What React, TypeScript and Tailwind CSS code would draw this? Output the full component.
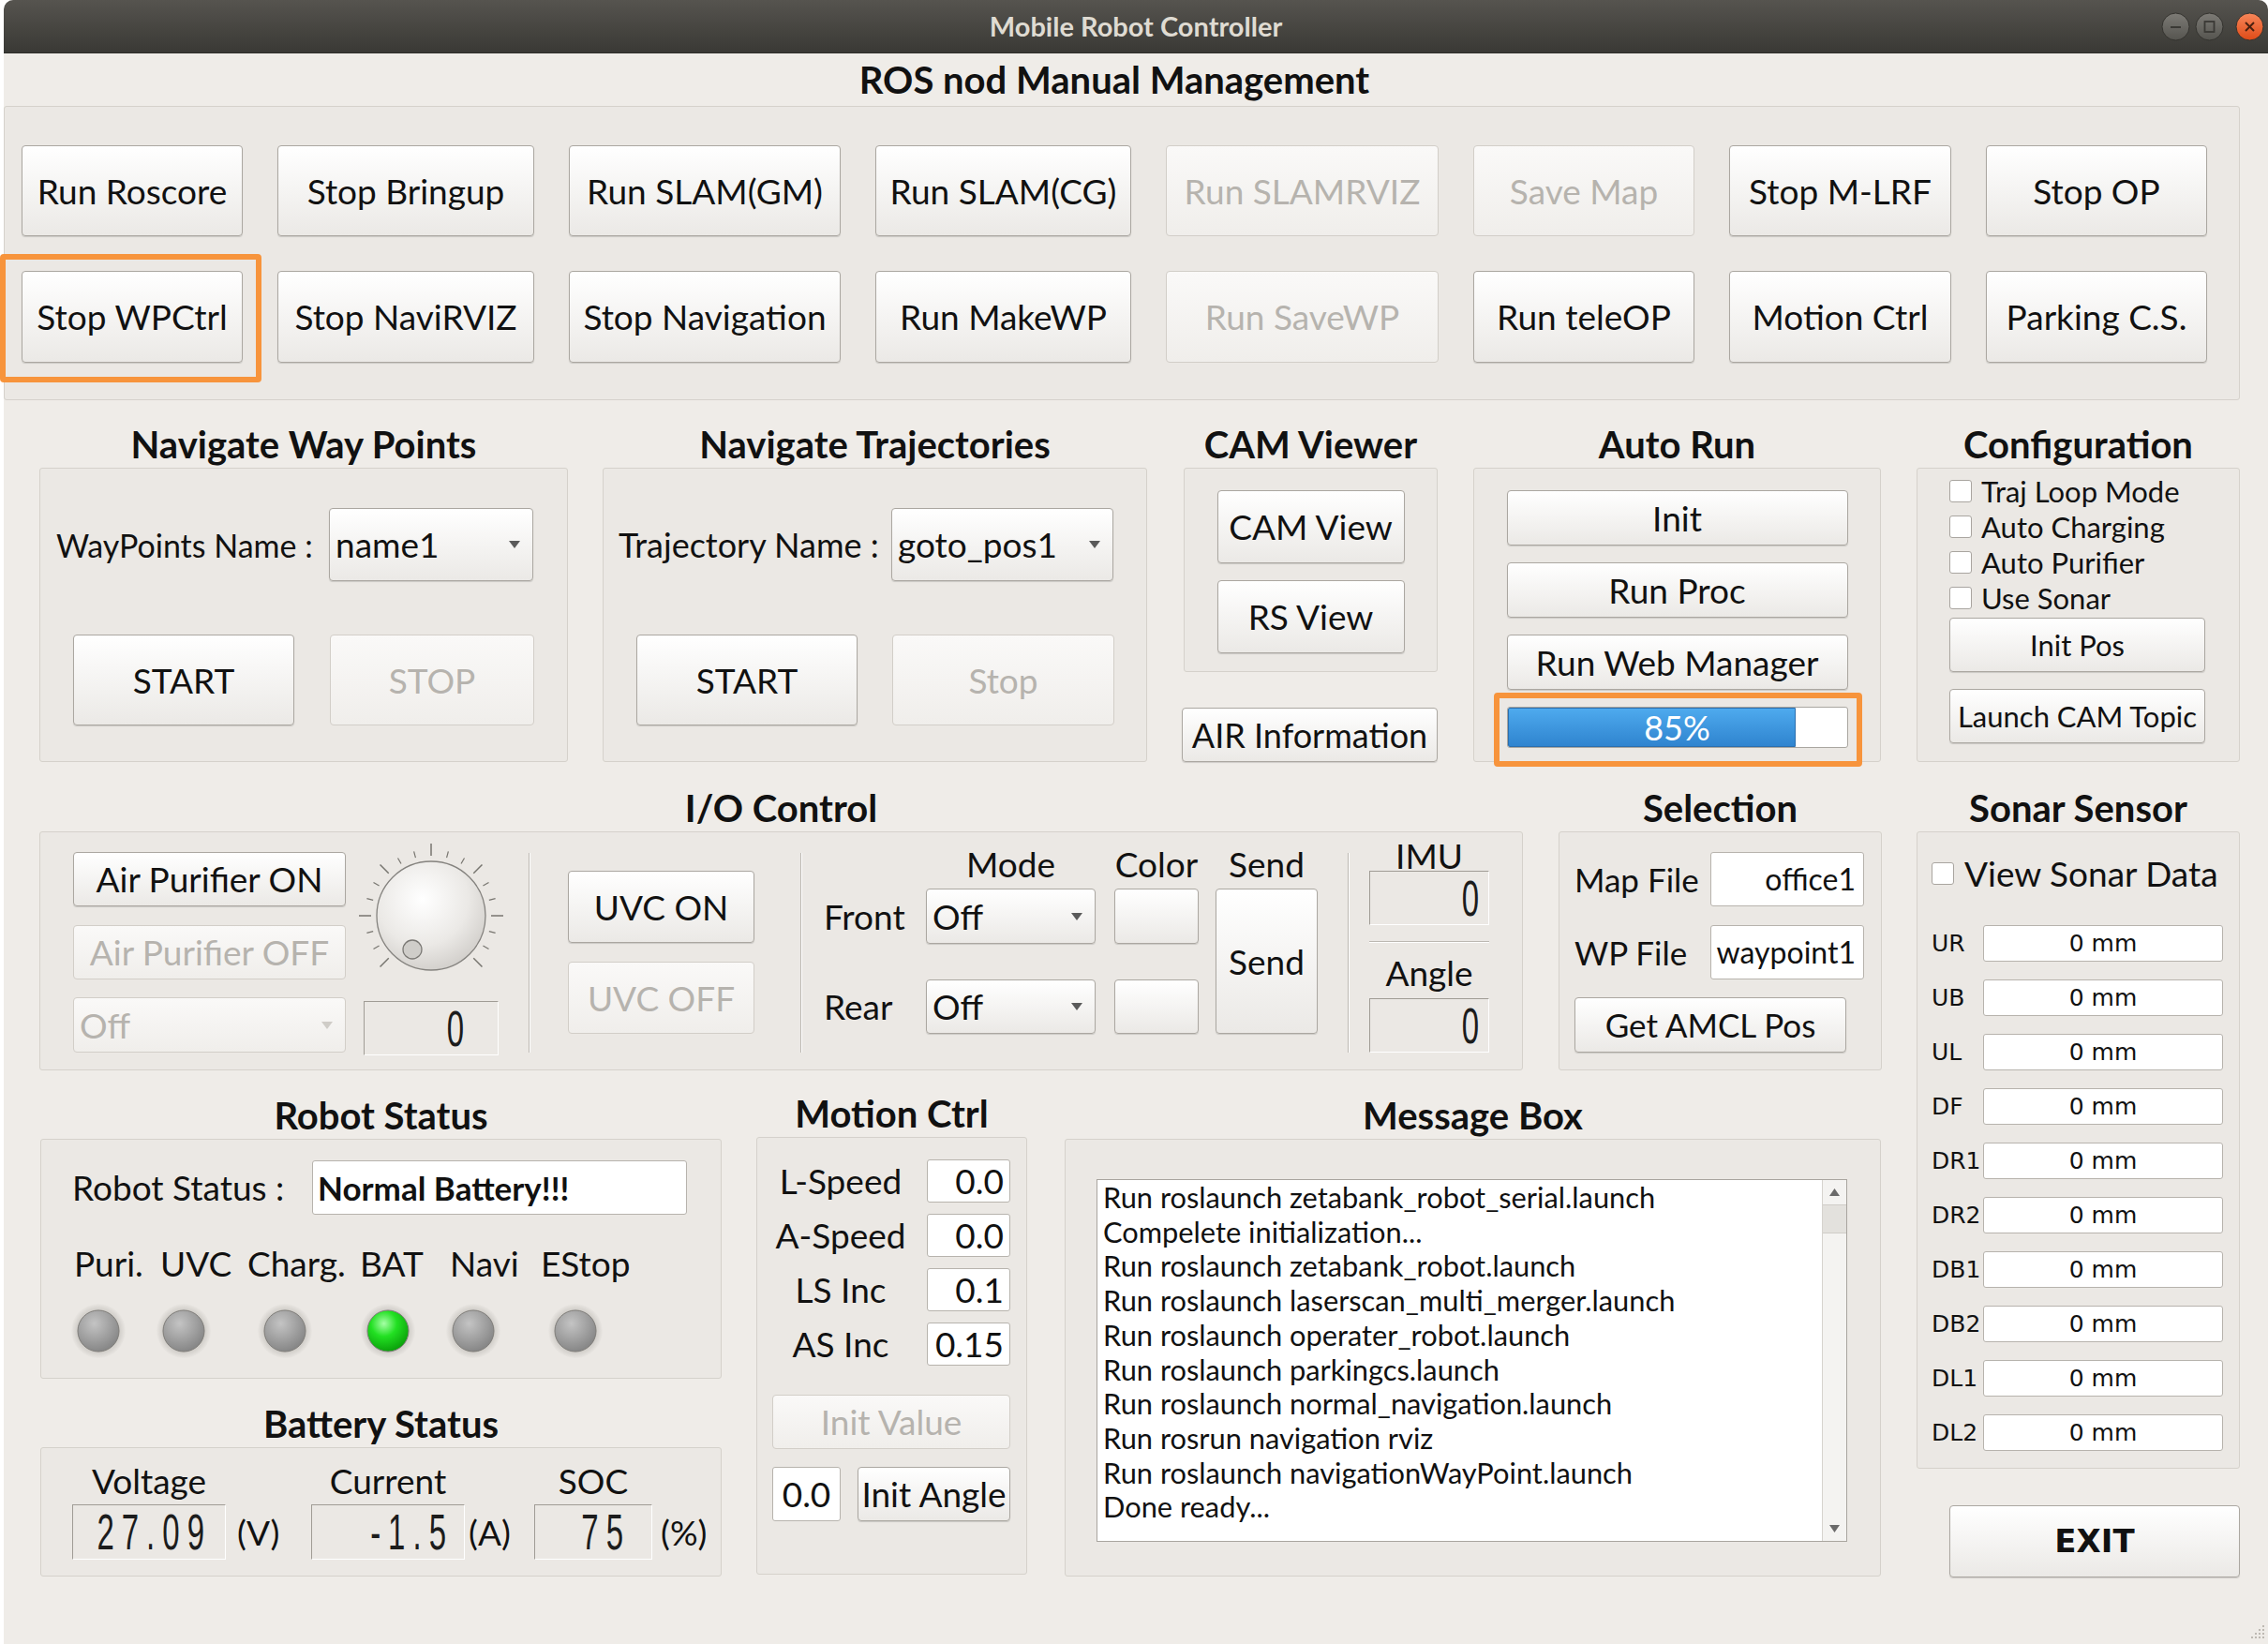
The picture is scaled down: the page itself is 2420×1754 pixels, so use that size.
import React from 'react';

const base = 'relative flex items-center whitespace-nowrap rounded-[4px] border bg-linear-to-b';
const onCls = 'border-[#aba7a1] from-[#ffffff] to-[#ebe9e6] text-[#111] shadow-[0_1px_1px_rgba(0,0,0,0.14)]';
const offCls = 'border-[#d2cec8] from-[#faf9f8] to-[#f0eeeb] text-[#b6b3ae]';
const fieldCls = 'flex items-center whitespace-nowrap rounded-[3px] border border-[#b7b3ad] bg-white';
const boxCls = 'rounded-[3px] border border-[#d5d1cb] bg-[#ebe8e4]';
const titleCls = 'flex items-end justify-center pb-[2px] text-[40px] font-bold leading-[46px] whitespace-nowrap';
const lcdCls = 'flex items-center justify-end border border-t-[#a09c95] border-l-[#a09c95] border-b-white border-r-white bg-[#ebe8e4]';
const sepCls = 'w-[2px] shrink-0 border-l border-l-[#bcb8b2] border-r border-r-white';

type BtnProps = { label: string; cls: string; off?: boolean; children?: React.ReactNode };

function Btn({ label, cls, off, children }: BtnProps) {
  return (
    <div className={`${base} justify-center ${off ? offCls : onCls} ${cls}`}>
      {label}
      {children}
    </div>
  );
}

function Combo({ value, cls, off }: { value: string; cls: string; off?: boolean }) {
  return (
    <div className={`${base} justify-between pl-[6px] pr-[13px] ${off ? offCls : onCls} ${cls}`}>
      <span>{value}</span>
      <svg width="12" height="8" viewBox="0 0 12 8">
        <polygon points="0,0 12,0 6,8" fill={off ? '#cfccc7' : '#5a5a5a'} />
      </svg>
    </div>
  );
}

function Lcd({ value, cls }: { value: string; cls: string }) {
  return (
    <div className={`${lcdCls} ${cls}`}>
      <span className="block font-['Liberation_Sans',sans-serif] text-[33px] leading-[33px] tracking-[8px] scale-y-[1.6] text-[#1c1c1c]">
        {value}
      </span>
    </div>
  );
}

function Check() {
  return <div className="w-[24px] h-[24px] shrink-0 rounded-[3px] border border-[#a9a5a0] bg-white" />;
}

function Dial() {
  const ticks = [];
  for (let i = 0; i <= 18; i++) {
    const a = ((-135 + i * 15) * Math.PI) / 180;
    const long = i % 3 === 0;
    const r1 = 64;
    const r2 = long ? 77 : 71;
    ticks.push(
      <line
        key={i}
        x1={72 + r1 * Math.sin(a)}
        y1={76 - r1 * Math.cos(a)}
        x2={72 + r2 * Math.sin(a)}
        y2={76 - r2 * Math.cos(a)}
        stroke="#77756f"
        strokeWidth={long ? 1.5 : 1.2}
      />
    );
  }
  return (
    <svg width="144" height="152" viewBox="0 0 144 152" className="overflow-visible">
      <defs>
        <radialGradient id="knobG" cx="42%" cy="35%" r="70%">
          <stop offset="0%" stopColor="#ffffff" />
          <stop offset="60%" stopColor="#ebe9e6" />
          <stop offset="100%" stopColor="#cfccc8" />
        </radialGradient>
      </defs>
      {ticks}
      <circle cx="72" cy="76" r="58" fill="url(#knobG)" stroke="#85837f" strokeWidth="1.3" />
      <circle cx="52" cy="112" r="10" fill="#cfcdc9" stroke="#7b7975" strokeWidth="1.3" />
    </svg>
  );
}

function Led({ on }: { on?: boolean }) {
  return (
    <svg width="60" height="60" viewBox="0 0 60 60" className="shrink-0">
      <defs>
        <radialGradient id="ledOffG" cx="40%" cy="32%" r="70%">
          <stop offset="0%" stopColor="#c4c4c4" />
          <stop offset="100%" stopColor="#858585" />
        </radialGradient>
        <radialGradient id="ledOnG" cx="40%" cy="32%" r="70%">
          <stop offset="0%" stopColor="#a6ffa6" />
          <stop offset="45%" stopColor="#22e022" />
          <stop offset="100%" stopColor="#0a9f0a" />
        </radialGradient>
        <radialGradient id="haloG" cx="50%" cy="50%" r="50%">
          <stop offset="70%" stopColor="#c9c6c1" />
          <stop offset="100%" stopColor="#e9e6e2" />
        </radialGradient>
      </defs>
      <circle cx="30" cy="30" r="29" fill="url(#haloG)" />
      <circle cx="30" cy="30" r="22" fill={on ? 'url(#ledOnG)' : 'url(#ledOffG)'} stroke="#7f7d79" strokeWidth="1" />
    </svg>
  );
}

function WinBtn({ kind }: { kind: 'min' | 'max' | 'close' }) {
  const close = kind === 'close';
  return (
    <svg width="31" height="31" viewBox="0 0 31 31">
      <defs>
        <linearGradient id="wbGray" x1="0" y1="0" x2="0" y2="1">
          <stop offset="0%" stopColor="#7d7b76" />
          <stop offset="100%" stopColor="#55544f" />
        </linearGradient>
        <linearGradient id="wbClose" x1="0" y1="0" x2="0" y2="1">
          <stop offset="0%" stopColor="#f7875a" />
          <stop offset="100%" stopColor="#df4a17" />
        </linearGradient>
      </defs>
      <circle cx="15.5" cy="15.5" r="14.5" fill={close ? 'url(#wbClose)' : 'url(#wbGray)'} stroke="#33322e" strokeWidth="1" />
      {kind === 'min' && <line x1="10" y1="16" x2="21" y2="16" stroke="#3a3935" strokeWidth="2" />}
      {kind === 'max' && <rect x="10.5" y="10" width="10" height="11" fill="none" stroke="#3a3935" strokeWidth="1.8" />}
      {close && (
        <g stroke="#4a2010" strokeWidth="2">
          <line x1="11" y1="11" x2="20" y2="20" />
          <line x1="20" y1="11" x2="11" y2="20" />
        </g>
      )}
    </svg>
  );
}

export default function App() {
  const row1: [string, string, boolean][] = [
    ['Run Roscore', 'w-[236px]', false],
    ['Stop Bringup', 'w-[274px]', false],
    ['Run SLAM(GM)', 'w-[290px]', false],
    ['Run SLAM(CG)', 'w-[273px]', false],
    ['Run SLAMRVIZ', 'w-[291px]', true],
    ['Save Map', 'w-[236px]', true],
    ['Stop M-LRF', 'w-[237px]', false],
    ['Stop OP', 'w-[236px]', false],
  ];
  const row2: [string, string, boolean][] = [
    ['Stop WPCtrl', 'w-[236px]', false],
    ['Stop NaviRVIZ', 'w-[274px]', false],
    ['Stop Navigation', 'w-[290px]', false],
    ['Run MakeWP', 'w-[273px]', false],
    ['Run SaveWP', 'w-[291px]', true],
    ['Run teleOP', 'w-[236px]', false],
    ['Motion Ctrl', 'w-[237px]', false],
    ['Parking C.S.', 'w-[236px]', false],
  ];
  const sonar = ['UR', 'UB', 'UL', 'DF', 'DR1', 'DR2', 'DB1', 'DB2', 'DL1', 'DL2'];
  const messages = [
    'Run roslaunch zetabank_robot_serial.launch',
    'Compelete initialization...',
    'Run roslaunch zetabank_robot.launch',
    'Run roslaunch laserscan_multi_merger.launch',
    'Run roslaunch operater_robot.launch',
    'Run roslaunch parkingcs.launch',
    'Run roslaunch normal_navigation.launch',
    'Run rosrun navigation rviz',
    'Run roslaunch navigationWayPoint.launch',
    'Done ready...',
  ];
  const motion = [
    ['L-Speed', '0.0'],
    ['A-Speed', '0.0'],
    ['LS Inc', '0.1'],
    ['AS Inc', '0.15'],
  ];

  return (
    <div className="w-[2420px] h-[1754px] overflow-hidden bg-white font-['Lato','Noto_Sans',sans-serif] text-[37px] text-[#111]">
      <div className="relative ml-[4px] w-[2416px] h-[1754px] flex flex-col bg-[#efece8] rounded-t-[10px]">
        {/* title bar */}
        <div className="h-[57px] shrink-0 grid grid-cols-[1fr_auto_1fr] items-center rounded-t-[10px] bg-linear-to-b from-[#56544f] to-[#3a3935] border-b border-[#2e2d2a]">
          <div />
          <div className="text-[29px] font-bold text-[#dfdbd2]">Mobile Robot Controller</div>
          <div className="flex justify-end items-center pr-[4px]">
            <WinBtn kind="min" />
            <div className="w-[5px]" />
            <WinBtn kind="max" />
            <div className="w-[12px]" />
            <WinBtn kind="close" />
          </div>
        </div>

        {/* ROS node manual management */}
        <div className="h-[56px] w-[2370px] shrink-0 flex items-center justify-center text-[40px] font-bold">
          ROS nod Manual Management
        </div>
        <div className={`${boxCls} w-[2386px] h-[314px] shrink-0 flex flex-col gap-[37px] pt-[41px] pl-[18px]`}>
          <div className="flex gap-[37px] h-[97px]">
            {row1.map(([label, w, off]) => (
              <Btn key={label} label={label} off={off} cls={`${w} h-full`} />
            ))}
          </div>
          <div className="flex gap-[37px] h-[98px]">
            {row2.map(([label, w, off], i) => (
              <Btn key={label} label={label} off={off} cls={`${w} h-full`}>
                {i === 0 && (
                  <span className="pointer-events-none absolute left-[-24px] top-[-19px] w-[279px] h-[137px] rounded-[4px] border-[6px] border-[#f7943c]" />
                )}
              </Btn>
            ))}
          </div>
        </div>

        {/* middle row */}
        <div className="flex shrink-0 h-[386px]">
          <div className="ml-[38px] w-[564px] flex flex-col">
            <div className={`${titleCls} h-[72px]`}>Navigate Way Points</div>
            <div className={`${boxCls} h-[314px] pt-[42px] pl-[17px]`}>
              <div className="flex items-center">
                <div className="w-[291px] whitespace-nowrap text-[34px]">WayPoints Name :</div>
                <Combo value="name1" cls="w-[218px] h-[78px]" />
              </div>
              <div className="flex mt-[57px]">
                <Btn label="START" cls="ml-[18px] w-[236px] h-[97px]" />
                <Btn label="STOP" off cls="ml-[38px] w-[218px] h-[97px]" />
              </div>
            </div>
          </div>

          <div className="ml-[37px] w-[581px] flex flex-col">
            <div className={`${titleCls} h-[72px]`}>Navigate Trajectories</div>
            <div className={`${boxCls} h-[314px] pt-[42px] pl-[16px]`}>
              <div className="flex items-center">
                <div className="w-[291px] whitespace-nowrap text-[36px]">Trajectory Name :</div>
                <Combo value="goto_pos1" cls="w-[237px] h-[78px]" />
              </div>
              <div className="flex mt-[57px]">
                <Btn label="START" cls="ml-[19px] w-[236px] h-[97px]" />
                <Btn label="Stop" off cls="ml-[37px] w-[237px] h-[97px]" />
              </div>
            </div>
          </div>

          <div className="ml-[39px] w-[271px] flex flex-col">
            <div className={`${titleCls} h-[72px]`}>CAM Viewer</div>
            <div className={`${boxCls} h-[218px] flex flex-col items-center pt-[23px] gap-[18px]`}>
              <Btn label="CAM View" cls="w-[200px] h-[78px]" />
              <Btn label="RS View" cls="w-[200px] h-[78px]" />
            </div>
            <Btn label="AIR Information" cls="mt-[38px] -ml-[2px] w-[273px] h-[58px] text-[36px]" />
          </div>

          <div className="ml-[38px] w-[435px] flex flex-col">
            <div className={`${titleCls} h-[72px]`}>Auto Run</div>
            <div className={`${boxCls} h-[314px] flex flex-col items-center pt-[23px] gap-[18px]`}>
              <Btn label="Init" cls="w-[364px] h-[59px]" />
              <Btn label="Run Proc" cls="w-[364px] h-[59px]" />
              <Btn label="Run Web Manager" cls="w-[364px] h-[59px]" />
              <div className="relative w-[364px] h-[44px] rounded-[3px] border border-[#a9a6a0] bg-white">
                <div className="h-full w-[85%] rounded-l-[2px] border border-[#2c6fae] bg-linear-to-b from-[#4eaaee] to-[#2f84cf]" />
                <div className="absolute inset-0 flex items-center justify-center text-[36px] text-white">85%</div>
                <span className="pointer-events-none absolute left-[-15px] top-[-16px] w-[393px] h-[79px] rounded-[4px] border-[6px] border-[#f7943c]" />
              </div>
            </div>
          </div>

          <div className="ml-[38px] w-[345px] flex flex-col">
            <div className={`${titleCls} h-[72px]`}>Configuration</div>
            <div className={`${boxCls} h-[314px] flex flex-col pt-[5px] pl-[34px] text-[31px]`}>
              {['Traj Loop Mode', 'Auto Charging', 'Auto Purifier', 'Use Sonar'].map((t) => (
                <div key={t} className="h-[38px] flex items-center">
                  <Check />
                  <span className="ml-[10px] whitespace-nowrap">{t}</span>
                </div>
              ))}
              <Btn label="Init Pos" cls="mt-[2px] w-[273px] h-[58px]" />
              <Btn label="Launch CAM Topic" cls="mt-[18px] w-[273px] h-[58px]" />
            </div>
          </div>
        </div>

        {/* lower area */}
        <div className="flex">
          <div className="w-[2004px] flex flex-col">
            {/* row A */}
            <div className="flex">
              <div className="ml-[38px] w-[1583px] flex flex-col">
                <div className={`${titleCls} h-[74px]`}>I/O Control</div>
                <div className={`${boxCls} h-[255px] flex items-start`}>
                  <div className="ml-[35px] w-[291px] pt-[21px] flex flex-col">
                    <Btn label="Air Purifier ON" cls="w-full h-[58px]" />
                    <Btn label="Air Purifier OFF" off cls="mt-[20px] w-full h-[58px]" />
                    <Combo value="Off" off cls="mt-[19px] w-full h-[59px]" />
                  </div>
                  <div className="ml-[19px] w-[144px] pt-[13px] flex flex-col">
                    <Dial />
                    <Lcd value="0" cls="mt-[15px] w-[144px] h-[58px] pr-[28px]" />
                  </div>
                  <div className={`${sepCls} ml-[32px] mt-[22px] h-[213px]`} />
                  <div className="ml-[40px] w-[199px] pt-[41px] flex flex-col">
                    <Btn label="UVC ON" cls="w-full h-[77px]" />
                    <Btn label="UVC OFF" off cls="mt-[20px] w-full h-[77px]" />
                  </div>
                  <div className={`${sepCls} ml-[49px] mt-[22px] h-[213px]`} />
                  <div className="ml-[23px] pt-[11px] flex">
                    <div className="w-[109px] flex flex-col">
                      <div className="h-[46px]" />
                      <div className="mt-[3px] h-[59px] flex items-center">Front</div>
                      <div className="mt-[38px] h-[58px] flex items-center">Rear</div>
                    </div>
                    <div className="w-[181px] flex flex-col">
                      <div className="h-[46px] leading-[46px] text-center">Mode</div>
                      <Combo value="Off" cls="mt-[3px] w-full h-[59px]" />
                      <Combo value="Off" cls="mt-[38px] w-full h-[58px]" />
                    </div>
                    <div className="ml-[20px] w-[90px] flex flex-col items-center">
                      <div className="h-[46px] leading-[46px] whitespace-nowrap">Color</div>
                      <Btn label="" cls="mt-[3px] w-full h-[59px]" />
                      <Btn label="" cls="mt-[38px] w-full h-[58px]" />
                    </div>
                    <div className="ml-[18px] w-[109px] flex flex-col">
                      <div className="h-[46px] leading-[46px] text-center">Send</div>
                      <Btn label="Send" cls="mt-[3px] w-full h-[155px]" />
                    </div>
                  </div>
                  <div className={`${sepCls} ml-[32px] mt-[22px] h-[213px]`} />
                  <div className="ml-[21px] w-[128px] flex flex-col">
                    <div className="mt-[7px] h-[36px] leading-[36px] text-center">IMU</div>
                    <Lcd value="0" cls="-mt-[2px] w-full h-[58px] pr-[2px]" />
                    <div className="mt-[17px] h-[2px] border-t border-t-[#bcb8b2] border-b border-b-white" />
                    <div className="mt-[9px] h-[46px] leading-[46px] text-center">Angle</div>
                    <Lcd value="0" cls="mt-[4px] w-full h-[58px] pr-[2px]" />
                  </div>
                </div>
              </div>

              <div className="ml-[38px] w-[345px] flex flex-col">
                <div className={`${titleCls} h-[74px]`}>Selection</div>
                <div className={`${boxCls} h-[255px] flex flex-col pt-[21px] pl-[16px] text-[35px]`}>
                  <div className="flex items-center">
                    <div className="w-[145px] whitespace-nowrap">Map File</div>
                    <div className={`${fieldCls} w-[164px] h-[58px] justify-end pr-[8px] text-[32px]`}>office1</div>
                  </div>
                  <div className="mt-[20px] flex items-center">
                    <div className="w-[145px] whitespace-nowrap">WP File</div>
                    <div className={`${fieldCls} w-[164px] h-[58px] justify-end pr-[8px] text-[32px]`}>waypoint1</div>
                  </div>
                  <Btn label="Get AMCL Pos" cls="mt-[19px] w-[290px] h-[59px]" />
                </div>
              </div>
            </div>

            {/* row B */}
            <div className="flex">
              <div className="ml-[39px] w-[727px] flex flex-col">
                <div className={`${titleCls} h-[73px]`}>Robot Status</div>
                <div className={`${boxCls} h-[256px] flex flex-col pt-[22px]`}>
                  <div className="flex items-center">
                    <div className="ml-[33px] w-[256px] whitespace-nowrap">Robot Status :</div>
                    <div className={`${fieldCls} w-[400px] h-[58px] pl-[5px] text-[35px] font-bold`}>Normal Battery!!!</div>
                  </div>
                  <div className="mt-[29px] h-[46px] flex items-center pl-[35px]">
                    <div className="w-[92px]">Puri.</div>
                    <div className="w-[93px]">UVC</div>
                    <div className="w-[120px]">Charg.</div>
                    <div className="w-[96px]">BAT</div>
                    <div className="w-[97px]">Navi</div>
                    <div>EStop</div>
                  </div>
                  <div className="mt-[19px] flex pl-[31px]">
                    <Led />
                    <div className="ml-[31px]"><Led /></div>
                    <div className="ml-[48px]"><Led /></div>
                    <div className="ml-[50px]"><Led on /></div>
                    <div className="ml-[31px]"><Led /></div>
                    <div className="ml-[49px]"><Led /></div>
                  </div>
                </div>
                <div className={`${titleCls} h-[73px]`}>Battery Status</div>
                <div className={`${boxCls} h-[138px] flex flex-col pt-[12px] pl-[33px]`}>
                  <div className="flex h-[46px] leading-[46px]">
                    <div className="w-[164px] text-center">Voltage</div>
                    <div className="ml-[91px] w-[164px] text-center">Current</div>
                    <div className="ml-[74px] w-[126px] text-center">SOC</div>
                  </div>
                  <div className="mt-[2px] flex items-center">
                    <Lcd value="27.09" cls="w-[164px] h-[59px] pr-[14px]" />
                    <div className="ml-[12px] w-[79px]">(V)</div>
                    <Lcd value="-1.5" cls="w-[164px] h-[59px] pr-[11px]" />
                    <div className="ml-[4px] w-[70px]">(A)</div>
                    <Lcd value="75" cls="w-[126px] h-[59px] pr-[22px]" />
                    <div className="ml-[9px]">(%)</div>
                  </div>
                </div>
              </div>

              <div className="ml-[37px] w-[289px] flex flex-col">
                <div className={`${titleCls} h-[71px]`}>Motion Ctrl</div>
                <div className={`${boxCls} h-[467px] flex flex-col pt-[23px] pl-[16px]`}>
                  <div className="flex flex-col gap-[12px]">
                    {motion.map(([l, v]) => (
                      <div key={l} className="flex items-center h-[46px]">
                        <div className="w-[146px] text-center whitespace-nowrap">{l}</div>
                        <div className={`${fieldCls} ml-[19px] w-[89px] h-[46px] justify-end pr-[6px]`}>{v}</div>
                      </div>
                    ))}
                  </div>
                  <Btn label="Init Value" off cls="mt-[31px] w-[254px] h-[58px]" />
                  <div className="mt-[19px] flex">
                    <div className={`${fieldCls} w-[73px] h-[58px] justify-center`}>0.0</div>
                    <Btn label="Init Angle" cls="ml-[18px] w-[163px] h-[58px]" />
                  </div>
                </div>
              </div>

              <div className="ml-[40px] w-[871px] flex flex-col">
                <div className={`${titleCls} h-[73px]`}>Message Box</div>
                <div className={`${boxCls} h-[467px] pt-[42px] pl-[33px]`}>
                  <div className="w-[801px] h-[387px] flex border border-[#a9a59f] bg-white">
                    <div className="flex-1 pl-[6px] pt-[1px] text-[30.8px] leading-[36.7px] whitespace-nowrap">
                      {messages.map((m) => (
                        <div key={m}>{m}</div>
                      ))}
                    </div>
                    <div className="w-[26px] flex flex-col border-l border-[#d6d3ce] bg-[#f4f3f1]">
                      <div className="h-[26px] flex items-center justify-center">
                        <svg width="11" height="8" viewBox="0 0 11 8"><polygon points="0,8 11,8 5.5,0" fill="#6a6a6a" /></svg>
                      </div>
                      <div className="h-[31px] border-y border-[#d0cdc8] bg-[#e3e1dd]" />
                      <div className="flex-1" />
                      <div className="h-[26px] flex items-center justify-center">
                        <svg width="11" height="8" viewBox="0 0 11 8"><polygon points="0,0 11,0 5.5,8" fill="#6a6a6a" /></svg>
                      </div>
                    </div>
                  </div>
                </div>
              </div>
            </div>
          </div>

          {/* sonar column */}
          <div className="ml-[37px] w-[345px] flex flex-col">
            <div className={`${titleCls} h-[74px]`}>Sonar Sensor</div>
            <div className={`${boxCls} h-[680px] flex flex-col pt-[25px] pl-[15px]`}>
              <div className="h-[38px] flex items-center">
                <Check />
                <span className="ml-[11px] whitespace-nowrap">View Sonar Data</span>
              </div>
              <div className="mt-[36px] flex flex-col gap-[19px] font-['DejaVu_Sans',sans-serif] text-[25px]">
                {sonar.map((s) => (
                  <div key={s} className="flex items-center h-[39px]">
                    <div className="w-[55px]">{s}</div>
                    <div className={`${fieldCls} w-[256px] h-[39px] justify-center`}>0 mm</div>
                  </div>
                ))}
              </div>
            </div>
            <Btn
              label="EXIT"
              cls="mt-[39px] ml-[35px] w-[310px] h-[77px] font-['DejaVu_Sans',sans-serif] text-[34px] font-bold"
            />
          </div>
        </div>

        {/* resize grip */}
        <svg width="22" height="22" viewBox="0 0 22 22" className="absolute right-[3px] bottom-[3px]">
          {[
            [19, 5],
            [15, 9],
            [19, 9],
            [11, 13],
            [15, 13],
            [19, 13],
            [7, 17],
            [11, 17],
            [15, 17],
            [19, 17],
          ].map(([x, y]) => (
            <rect key={`${x}-${y}`} x={x} y={y} width="2" height="2" fill="#bdb9b3" />
          ))}
        </svg>
      </div>
    </div>
  );
}
